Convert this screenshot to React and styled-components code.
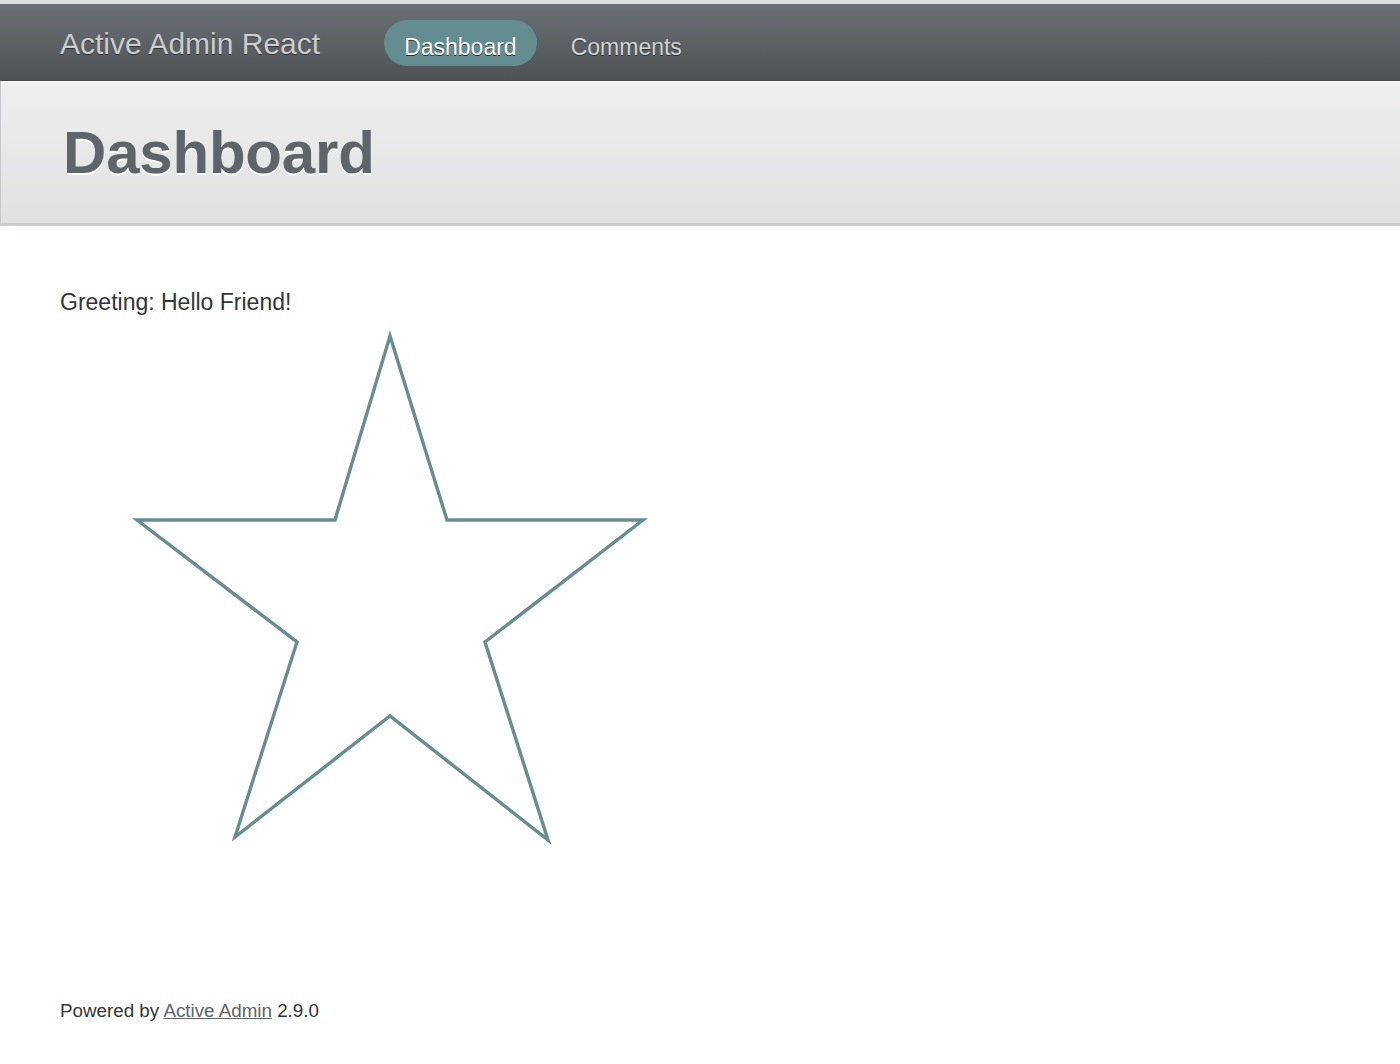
import React from "react";
import styled, { createGlobalStyle } from "styled-components";

const GlobalStyle = createGlobalStyle`
  html, body {
    margin: 0;
    padding: 0;
    background: #ffffff;
  }
  body {
    font-family: "Liberation Sans", Arial, sans-serif;
    color: #323537;
  }
`;

const tabs = [
  { label: "Dashboard", active: true },
  { label: "Comments", active: false },
];

export default function App() {
  return (
    <Page>
      <GlobalStyle />
      <Header>
        <SiteTitle>Active Admin React</SiteTitle>
        <Tabs>
          {tabs.map((tab) => (
            <Tab key={tab.label} $active={tab.active}>
              {tab.label}
            </Tab>
          ))}
        </Tabs>
      </Header>
      <TitleBar>
        <PageTitle>Dashboard</PageTitle>
      </TitleBar>
      <Main>
        <Greeting>Greeting: Hello Friend!</Greeting>
        <Star width="600" height="530" viewBox="0 0 600 530">
          <polygon
            points="330,11 387,195 583,195 425,317 488,515 330,391 175,512 237,317 77,195 275,195"
            fill="none"
            stroke="#678d91"
            strokeWidth="3.4"
          />
        </Star>
      </Main>
      <Footer>
        Powered by <FooterLink href="#">Active Admin</FooterLink> 2.9.0
      </Footer>
    </Page>
  );
}

const Page = styled.div`
  display: flex;
  flex-direction: column;
  min-height: 100vh;
`;

const Header = styled.header`
  display: flex;
  align-items: center;
  height: 76px;
  padding: 0 60px;
  border-top: 4px solid #dfe0e1;
  background: linear-gradient(180deg, #6a7176 0%, #4d5256 100%);
  border-bottom: 1px solid #44484b;
  box-sizing: content-box;
`;

const SiteTitle = styled.h1`
  margin: 3px 64px 0 0;
  font-size: 30px;
  font-weight: 400;
  color: #cdcdcd;
  text-shadow: 0 1px 0 #2f3234;
  white-space: nowrap;
`;

const Tabs = styled.nav`
  display: flex;
  align-items: center;
`;

const Tab = styled.a`
  display: flex;
  align-items: center;
  height: 46px;
  padding: 8px 20px 0;
  box-sizing: border-box;
  margin: 2px 14px 0 0;
  border-radius: 23px;
  font-size: 23px;
  color: ${(p) => (p.$active ? "#ffffff" : "#d2d4d5")};
  background: ${(p) => (p.$active ? "#638d91" : "transparent")};
  text-shadow: 0 1px 0 #2a2d2f;
  cursor: pointer;
`;

const TitleBar = styled.div`
  display: flex;
  align-items: center;
  height: 142px;
  padding: 0 62px;
  background: linear-gradient(180deg, #efefef 0%, #dfe1e2 100%);
  border-bottom: 3px solid #c9cfd1;
  border-left: 1px solid #c6c8c9;
  box-shadow: inset 0 1px 0 #ffffff;
`;

const PageTitle = styled.h2`
  margin: 0;
  font-size: 60px;
  font-weight: 700;
  color: #5e6469;
  text-shadow: 0 2px 0 #ffffff;
  letter-spacing: -0.2px;
`;

const Main = styled.main`
  flex: 1;
  display: flex;
  flex-direction: column;
  align-items: flex-start;
  padding: 62px 60px 0;
`;

const Greeting = styled.p`
  margin: 0;
  font-size: 23px;
  line-height: 28px;
  color: #2f3638;
`;

const Star = styled.svg`
  display: block;
  margin-top: 9px;
`;

const Footer = styled.footer`
  padding: 0 60px 42px;
  font-size: 18.8px;
  line-height: 22px;
  color: #2f3638;
`;

const FooterLink = styled.a`
  color: #5e6469;
  text-decoration: underline;
`;
